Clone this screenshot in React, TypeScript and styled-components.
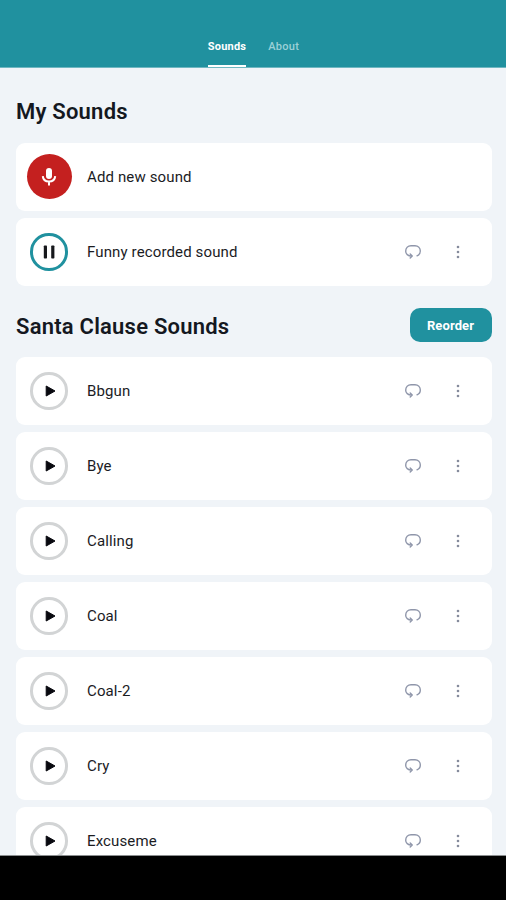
import React from "react";
import styled, { createGlobalStyle } from "styled-components";

const GlobalStyle = createGlobalStyle`
  * { box-sizing: border-box; }
  body { margin: 0; background: #f0f4f8; font-family: Roboto, sans-serif; color: #14181f; }
  button { font-family: inherit; border: 0; padding: 0; background: none; }
`;

const Screen = styled.div`
  display: flex;
  flex-direction: column;
  height: 900px;
  width: 506px;
  overflow: hidden;
  background: #f0f4f8;
`;

const Header = styled.header`
  flex: none;
  height: 68px;
  background: #20919f;
  border-bottom: 1px solid #6fb7c1;
  display: flex;
  justify-content: center;
  align-items: flex-end;
  gap: 22px;
  padding-left: 1px;
`;

const Tab = styled.button<{ $active?: boolean }>`
  height: 30px;
  padding-bottom: 9px;
  font-size: 11px;
  line-height: 16px;
  letter-spacing: ${(p) => (p.$active ? "0.2px" : "0.3px")};
  font-weight: ${(p) => (p.$active ? 700 : 500)};
  color: ${(p) => (p.$active ? "#ffffff" : "#9bd0d7")};
  border-bottom: 2px solid ${(p) => (p.$active ? "#ffffff" : "transparent")};
`;

const Content = styled.main`
  flex: 1;
  min-height: 0;
  overflow: hidden;
  padding: 25px 14.5px 0 16px;
  border-bottom: 1px solid #8b8e8f;
`;

const SectionHead = styled.div<{ $gap: number }>`
  display: flex;
  align-items: center;
  justify-content: space-between;
  height: 34px;
  margin-bottom: ${(p) => p.$gap}px;
`;

const Title = styled.h2`
  margin: 4px 0 0;
  font-size: 22px;
  line-height: 30px;
  font-weight: 600;
  letter-spacing: 0.22px;
`;

const ReorderButton = styled.button`
  width: 82px;
  height: 34px;
  border-radius: 10px;
  background: #20919f;
  color: #fff;
  font-size: 13px;
  font-weight: 700;
  letter-spacing: 0.1px;
  padding-top: 1px;
`;

const List = styled.div`
  display: flex;
  flex-direction: column;
  gap: 7.5px;
`;

const MyList = styled(List)`
  margin-bottom: 22px;
`;

const Card = styled.div`
  flex: none;
  display: flex;
  align-items: center;
  height: 67.5px;
  border-radius: 9px;
  background: #fff;
  padding: 0 31.5px 0 11px;
`;

const Leading = styled.div`
  width: 44px;
  display: flex;
  justify-content: center;
  margin-right: 16px;
`;

const Disc = styled.div<{ $kind: "record" | "pause" | "play" }>`
  display: flex;
  align-items: center;
  justify-content: center;
  border-radius: 50%;
  width: ${(p) => (p.$kind === "record" ? 45 : 37.5)}px;
  height: ${(p) => (p.$kind === "record" ? 45 : 37.5)}px;
  flex: none;
  background: ${(p) => (p.$kind === "record" ? "#c4201f" : "#fff")};
  border: ${(p) =>
    p.$kind === "record" ? "0" : p.$kind === "pause" ? "3px solid #20919f" : "3px solid #d2d4d5"};
`;

const Label = styled.span`
  flex: 1;
  font-size: 15px;
  line-height: 20px;
  letter-spacing: 0.13px;
  color: #1b1c1f;
`;

const Actions = styled.div`
  display: flex;
  align-items: center;
  gap: 34px;
`;

const MicIcon = () => (
  <svg width="16" height="20" viewBox="0 0 16 20" fill="none">
    <rect x="5" y="1" width="6" height="11" rx="3" fill="#fff" />
    <path d="M1.8 9.2c.3 3.5 2.8 5.4 6.2 5.4s5.9-1.9 6.2-5.4M8 14.6V18.5" stroke="#fff" strokeWidth="2" />
  </svg>
);

const PauseIcon = () => (
  <svg width="14" height="14" viewBox="0 0 14 14" fill="#17181c">
    <rect x="1.8" y="0.5" width="3.2" height="13" rx="0.8" />
    <rect x="9.2" y="0.5" width="3.2" height="13" rx="0.8" />
  </svg>
);

const PlayIcon = () => (
  <svg width="14" height="14" viewBox="0 0 14 14">
    <path d="M4.200 2 13 7 4.200 12Z" fill="#08090f" stroke="#08090f" strokeLinejoin="round" />
  </svg>
);

const LoopIcon = () => (
  <svg width="18" height="16" viewBox="0 0 18 16" fill="none" stroke="#8f96aa" strokeWidth="1.4" strokeLinecap="round" strokeLinejoin="round">
    <path d="M7.6 12C3.8 12 1.700 10 1.700 7.200 1.700 4 4 1.700 7 1.700h4c3 0 5.300 2.300 5.300 5.300 0 2.300-1.300 4.100-3.300 4.800" />
    <path d="M6.200 9.900 8.200 12 6.200 14.100" />
  </svg>
);

const MoreIcon = () => (
  <svg width="4" height="14" viewBox="0 0 4 14" fill="#858b9c">
    <circle cx="2" cy="2" r="1.3" />
    <circle cx="2" cy="7" r="1.3" />
    <circle cx="2" cy="12" r="1.3" />
  </svg>
);

function SoundRow({ name, playing }: { name: string; playing?: boolean }) {
  return (
    <Card>
      <Leading>
        <Disc $kind={playing ? "pause" : "play"}>{playing ? <PauseIcon /> : <PlayIcon />}</Disc>
      </Leading>
      <Label>{name}</Label>
      <Actions>
        <LoopIcon />
        <MoreIcon />
      </Actions>
    </Card>
  );
}

const NavigationBar = styled.div`
  flex: none;
  height: 44px;
  background: #000;
`;

const sounds = ["Bbgun", "Bye", "Calling", "Coal", "Coal-2", "Cry", "Excuseme"];

export default function App() {
  return (
    <Screen>
      <GlobalStyle />
      <Header>
        <Tab $active>Sounds</Tab>
        <Tab>About</Tab>
      </Header>
      <Content>
        <SectionHead $gap={16}>
          <Title>My Sounds</Title>
        </SectionHead>
        <MyList>
          <Card>
            <Leading>
              <Disc $kind="record">
                <MicIcon />
              </Disc>
            </Leading>
            <Label>Add new sound</Label>
          </Card>
          <SoundRow name="Funny recorded sound" playing />
        </MyList>
        <SectionHead $gap={15.5}>
          <Title>Santa Clause Sounds</Title>
          <ReorderButton>Reorder</ReorderButton>
        </SectionHead>
        <List>
          {sounds.map((name) => (
            <SoundRow key={name} name={name} />
          ))}
        </List>
      </Content>
      <NavigationBar />
    </Screen>
  );
}
